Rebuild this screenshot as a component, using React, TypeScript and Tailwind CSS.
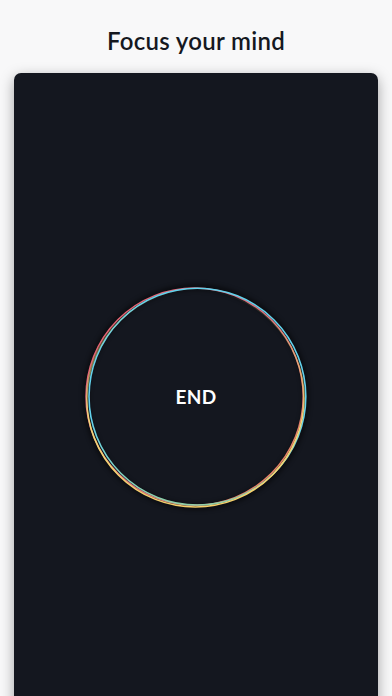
export default function App() {
  return (
    <div
      className="w-[392px] h-[696px] overflow-hidden bg-[#f8f8f9] flex flex-col items-center"
      style={{ fontFamily: "Lato, 'Open Sans', sans-serif" }}
    >
      <h1 className="mt-[25px] h-[31px] text-[24px] leading-[31px] font-semibold text-[#15181f] tracking-[0.3px]">
        Focus your mind
      </h1>
      <div className="mt-[17px] w-[364px] h-[700px] shrink-0 rounded-[7px] bg-[#14171f] shadow-[0_4px_14px_rgba(0,0,0,0.35)] flex flex-col items-center">
        <div className="mt-[206px] relative w-[236px] h-[236px] flex items-center justify-center">
          <svg
            className="absolute inset-0"
            width="236"
            height="236"
            viewBox="0 0 236 236"
          >
            <defs>
              <filter id="glow" x="-20%" y="-20%" width="140%" height="140%">
                <feGaussianBlur stdDeviation="2.5" />
              </filter>
              <linearGradient id="redG" x1="0" y1="0" x2="1" y2="1">
                <stop offset="0" stopColor="#e8606d" />
                <stop offset="0.5" stopColor="#d96a80" />
                <stop offset="1" stopColor="#e98a5c" />
              </linearGradient>
              <linearGradient id="cyanG" x1="0" y1="0" x2="0" y2="1">
                <stop offset="0" stopColor="#62d2ec" />
                <stop offset="0.6" stopColor="#62d2ec" />
                <stop offset="1" stopColor="#8fd0a8" />
              </linearGradient>
              <linearGradient id="yellowG" x1="0" y1="0" x2="0" y2="1">
                <stop offset="0" stopColor="#f3d77a" stopOpacity="0" />
                <stop offset="0.4" stopColor="#f3d77a" stopOpacity="0.6" />
                <stop offset="0.6" stopColor="#f3d77a" />
                <stop offset="1" stopColor="#f5cf6a" />
              </linearGradient>
            </defs>
            <circle cx="118" cy="118" r="110" fill="none" stroke="#000" strokeWidth="5" opacity="0.6" filter="url(#glow)" />
            <circle cx="116.6" cy="117.6" r="108.6" fill="none" stroke="url(#redG)" strokeWidth="1.5" />
            <circle cx="119.4" cy="117.6" r="108.4" fill="none" stroke="url(#cyanG)" strokeWidth="1.6" />
            <circle cx="117.4" cy="119.4" r="108.6" fill="none" stroke="url(#yellowG)" strokeWidth="1.6" />
          </svg>
          <span className="relative text-[19px] font-bold text-white tracking-[0.3px]">
            END
          </span>
        </div>
      </div>
    </div>
  );
}
